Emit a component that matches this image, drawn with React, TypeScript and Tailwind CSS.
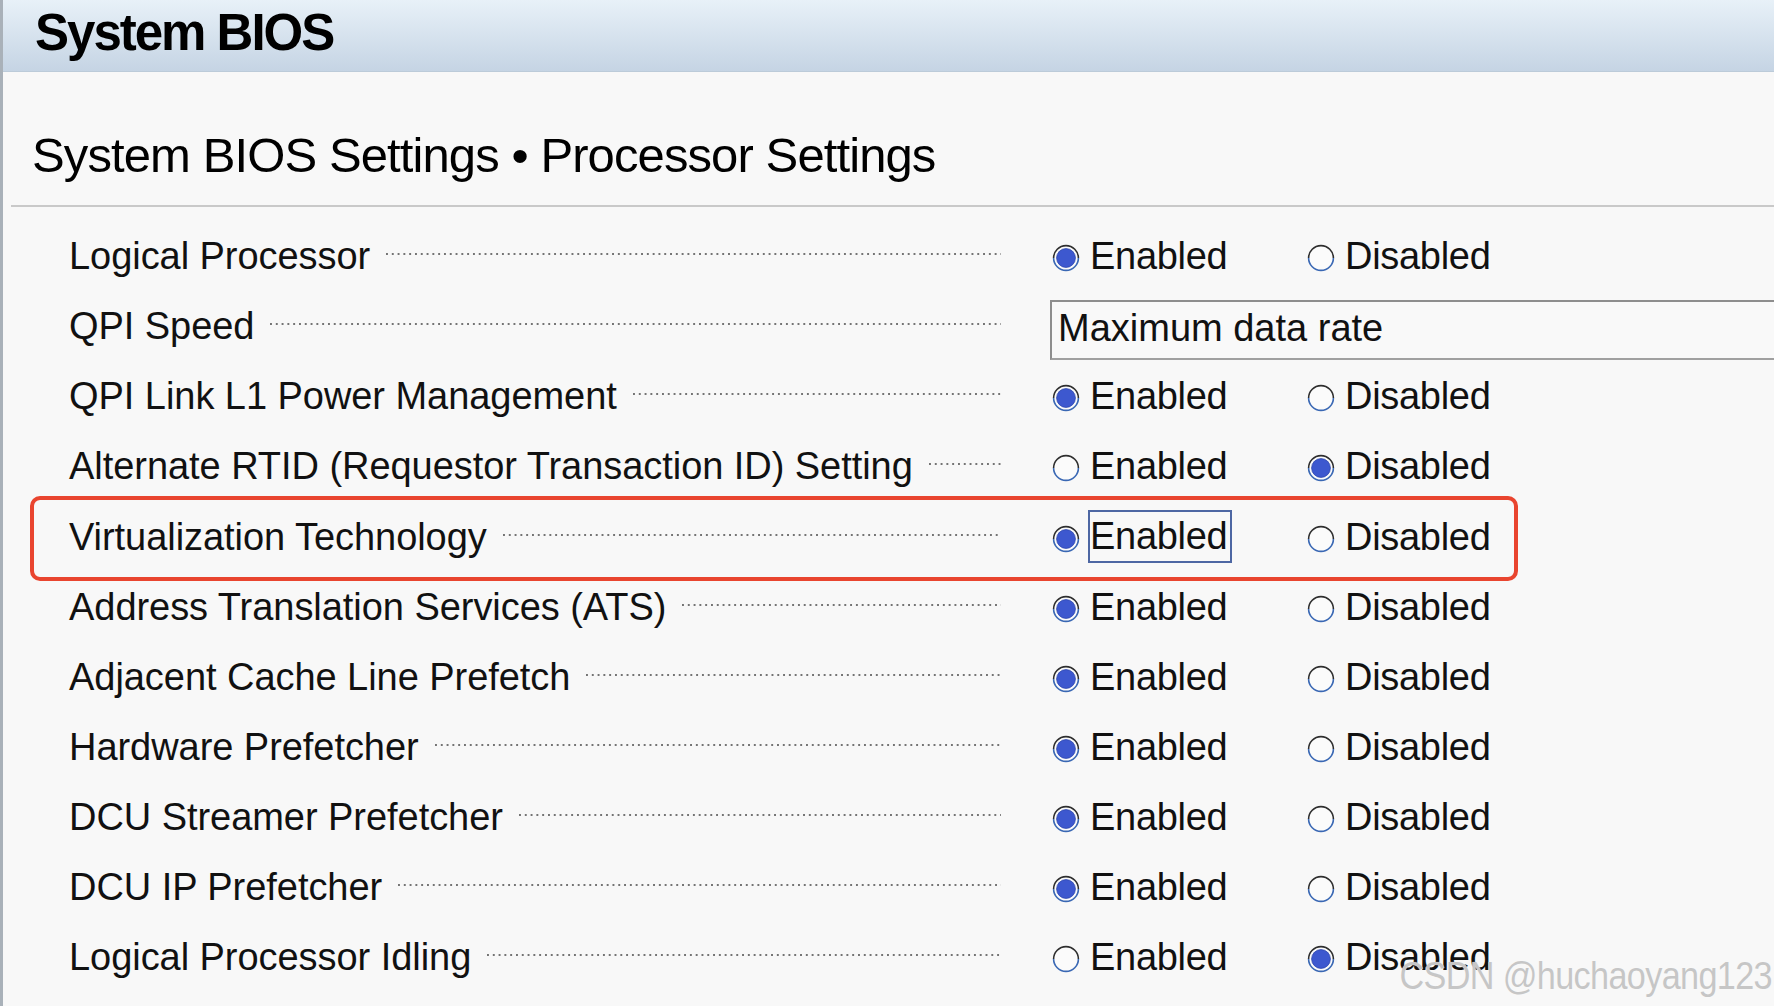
import React from "react";

type Row = {
  label: string;
  value?: "en" | "dis";
  select?: string;
  focus?: boolean;
  highlight?: boolean;
};

const rows: Row[] = [
  { label: "Logical Processor", value: "en" },
  { label: "QPI Speed", select: "Maximum data rate" },
  { label: "QPI Link L1 Power Management", value: "en" },
  { label: "Alternate RTID (Requestor Transaction ID) Setting", value: "dis" },
  { label: "Virtualization Technology", value: "en", focus: true, highlight: true },
  { label: "Address Translation Services (ATS)", value: "en" },
  { label: "Adjacent Cache Line Prefetch", value: "en" },
  { label: "Hardware Prefetcher", value: "en" },
  { label: "DCU Streamer Prefetcher", value: "en" },
  { label: "DCU IP Prefetcher", value: "en" },
  { label: "Logical Processor Idling", value: "dis" },
];

function Radio({ checked }: { checked: boolean }) {
  return (
    <svg width="28" height="28" viewBox="0 0 28 28" className="shrink-0 mt-[4px]">
      <circle cx="14" cy="14" r="12.4" fill="#fbfbfb" />
      <path d="M1.6 14 A12.4 12.4 0 0 1 26.4 14" fill="none" stroke="#2e2e2e" strokeWidth="1.6" />
      <path d="M26.4 14 A12.4 12.4 0 0 1 1.6 14" fill="none" stroke="#3a68b4" strokeWidth="1.6" />
      {checked && <circle cx="14" cy="14" r="9.4" fill="#3d58cf" stroke="#2d46ad" strokeWidth="0.8" />}
    </svg>
  );
}

function Option({ text, checked, focus, width }: { text: string; checked: boolean; focus?: boolean; width: string }) {
  return (
    <div className={`flex items-center h-full shrink-0 ${width}`}>
      <Radio checked={checked} />
      {focus ? (
        <span className="ml-[10px] inline-block leading-none pt-[5px] pb-[6px] pr-[3px] outline-2 outline-[#4d67a3] text-[38px] tracking-[-0.3px] text-[#111]">
          {text}
        </span>
      ) : (
        <span className="ml-[10px] leading-none text-[38px] tracking-[-0.3px] text-[#111]">{text}</span>
      )}
    </div>
  );
}

export default function App() {
  return (
    <div
      className="relative w-full h-[1006px] overflow-hidden bg-[#f8f8f8] border-l-[3px] border-[#a9b1b9]"
      style={{ fontFamily: '"Liberation Sans", Arial, sans-serif' }}
    >
      {/* Header bar */}
      <div className="h-[72px] pt-[7px] pl-[32px] bg-[linear-gradient(to_bottom,#e8f1f8,#c5d4e4)] border-b border-[#bccbd9]">
        <div className="text-[51px] leading-none font-bold tracking-[-2px] text-black">System BIOS</div>
      </div>

      {/* Title */}
      <div className="h-[133px] pt-[59px] pl-[29px]">
        <div className="text-[49px] leading-none tracking-[-0.9px] text-black whitespace-nowrap">
          System BIOS Settings • Processor Settings
        </div>
      </div>
      <div className="h-[2px] ml-[8px] bg-[#c9c9c9]" />

      {/* Rows */}
      <div className="mt-[14px] flex flex-col">
        {rows.map((r) => (
          <div key={r.label} className="relative flex items-center h-[70.15px] pl-[66px]">
            {r.highlight && (
              <div className="absolute left-[27px] top-[-6px] w-[1488px] h-[85px] border-[4.5px] border-[#e9452f] rounded-[10px] pointer-events-none" />
            )}
            <div className="flex items-center w-[932px] h-full shrink-0">
              <span className="leading-none text-[38px] tracking-[-0.05px] text-[#111] whitespace-nowrap">{r.label}</span>
              <span className="flex-1 ml-[16px] mb-[4px] h-[2px] bg-[linear-gradient(to_right,#747474_1.5px,transparent_1.5px)] bg-[length:5.8px_2px] bg-repeat-x" />
            </div>
            {r.select ? (
              <div className="ml-[49px] mt-[8px] h-[60px] w-[780px] shrink-0 border-2 border-[#8e8e8e] border-b-[#a0a0a0] bg-[#f9f9f9] pt-[7px] pl-[6px]">
                <span className="leading-none text-[38px] tracking-[0px] text-[#111] whitespace-nowrap">{r.select}</span>
              </div>
            ) : (
              <div className="flex items-center h-full ml-[51px]">
                <Option text="Enabled" checked={r.value === "en"} focus={r.focus} width="w-[255px]" />
                <Option text="Disabled" checked={r.value === "dis"} width="w-[240px]" />
              </div>
            )}
          </div>
        ))}
      </div>

      {/* Watermark */}
      <div className="absolute right-[2px] top-[957px] text-[38px] leading-none tracking-[-0.7px] text-[#c6c6c6] scale-x-[0.9] origin-right whitespace-nowrap [text-shadow:0_0_1px_#ffffff]">
        CSDN @huchaoyang123
      </div>
    </div>
  );
}
